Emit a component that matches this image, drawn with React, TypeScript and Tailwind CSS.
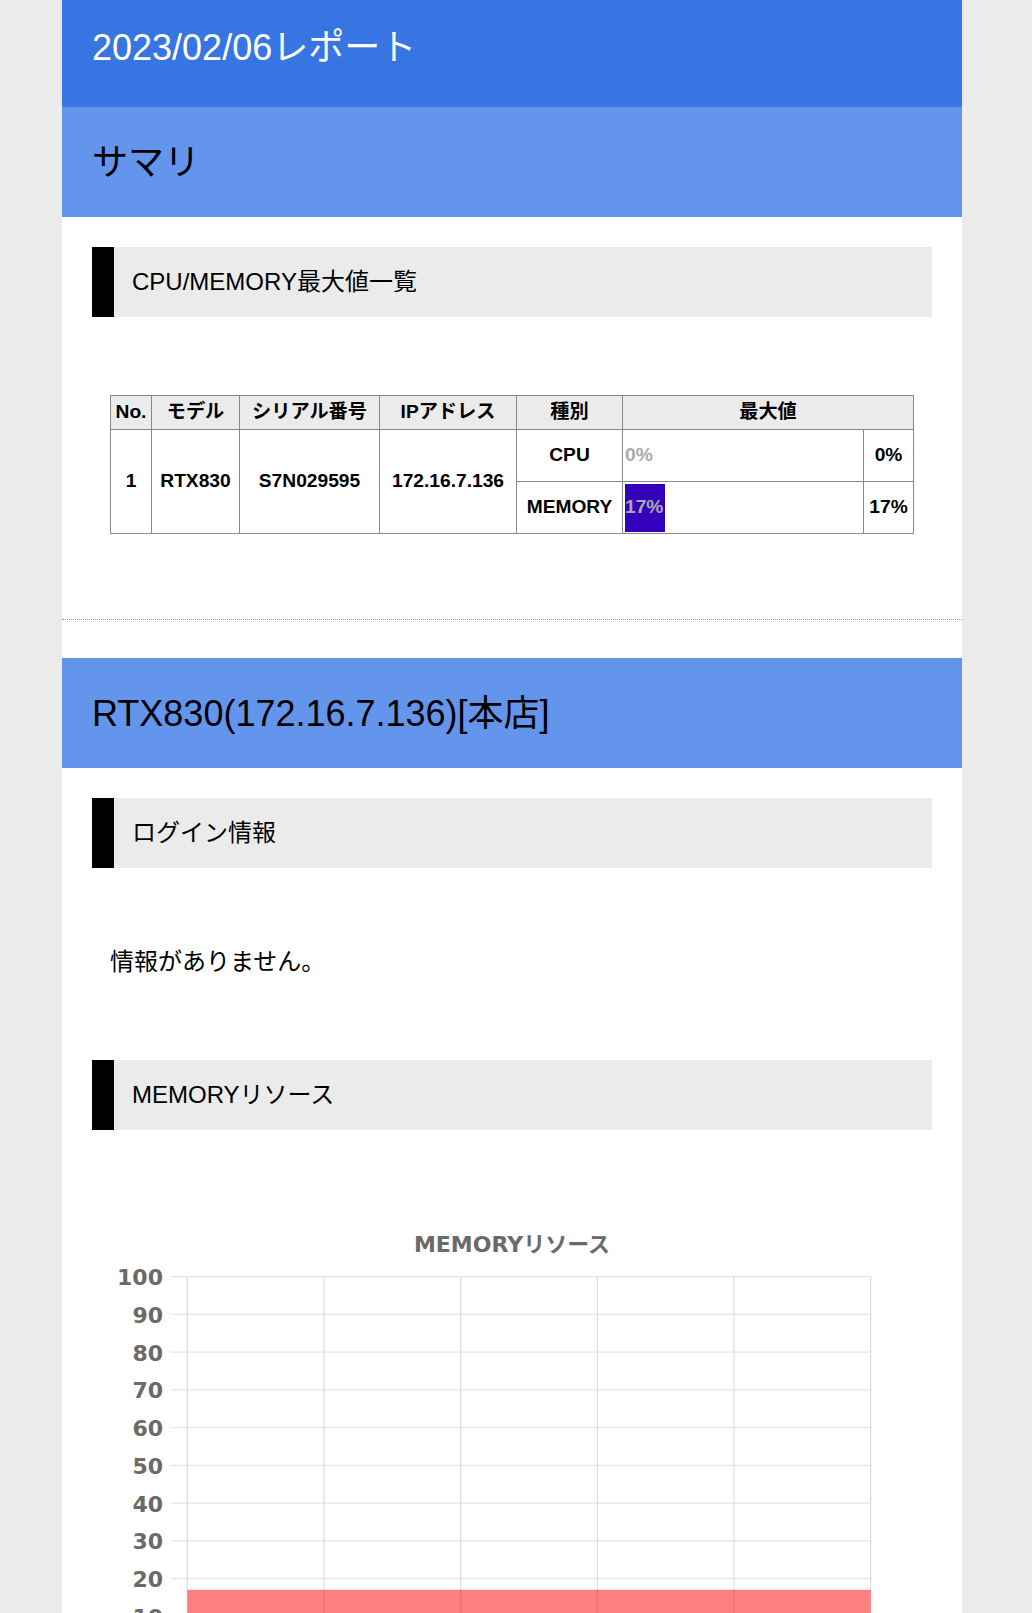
import type { ReactNode } from 'react'

const FONT = '"Liberation Sans", "Noto Sans CJK JP", sans-serif'

function SectionTitle({ children }: { children: ReactNode }) {
  return (
    <h3 className="h-[70px] flex items-center bg-[#ebebeb] border-l-[22px] border-black pl-[18px] text-[24px] leading-[36px] text-black font-normal">
      {children}
    </h3>
  )
}

function BandTitle({ children, dark }: { children: ReactNode; dark?: boolean }) {
  if (dark) {
    return (
      <h1 className="h-[107px] flex items-center pb-[13px] px-[30px] bg-[#3775e3] text-white text-[36px] leading-[47px] font-normal">
        {children}
      </h1>
    )
  }
  return (
    <h2 className="h-[110px] flex items-center px-[30px] bg-[#6495ed] text-black text-[36px] leading-[47px] font-normal">
      {children}
    </h2>
  )
}

function Bar({ value }: { value: number }) {
  return (
    <div
      className={
        'h-[48px] flex items-center whitespace-nowrap text-[#aaaaaa] ' +
        (value > 0 ? 'bg-[#3300bb]' : '')
      }
      style={{ width: `${value}%` }}
    >
      {value}%
    </div>
  )
}

const rows = [
  { kind: 'CPU', value: 0 },
  { kind: 'MEMORY', value: 17 },
]

function MaxTable() {
  const cell = 'border border-[#888888] text-center align-middle'
  return (
    <table className="table-fixed border-collapse w-[803px] text-[19.2px] font-bold text-black">
      <colgroup>
        <col className="w-[41px]" />
        <col className="w-[88px]" />
        <col className="w-[140px]" />
        <col className="w-[137px]" />
        <col className="w-[106px]" />
        <col className="w-[241px]" />
        <col className="w-[50px]" />
      </colgroup>
      <thead>
        <tr className="h-[34px] bg-[#ebebeb]">
          <th className={cell}>No.</th>
          <th className={cell}>モデル</th>
          <th className={cell}>シリアル番号</th>
          <th className={cell}>IPアドレス</th>
          <th className={cell}>種別</th>
          <th className={cell} colSpan={2}>
            最大値
          </th>
        </tr>
      </thead>
      <tbody>
        {rows.map((r, i) => (
          <tr key={r.kind} className="h-[52px]">
            {i === 0 && (
              <>
                <td className={cell} rowSpan={2}>1</td>
                <td className={cell} rowSpan={2}>RTX830</td>
                <td className={cell} rowSpan={2}>S7N029595</td>
                <td className={cell} rowSpan={2}>172.16.7.136</td>
              </>
            )}
            <td className={cell}>{r.kind}</td>
            <td className="border border-[#888888] align-middle px-[2px] py-[1px]">
              <Bar value={r.value} />
            </td>
            <td className={cell}>{r.value}%</td>
          </tr>
        ))}
      </tbody>
    </table>
  )
}

function MemoryChart() {
  const top = 76.7
  const step = 37.73
  const left = 95.3
  const right = 778.7
  const colW = (right - left) / 5
  const labels = [100, 90, 80, 70, 60, 50, 40, 30, 20, 10, 0]
  const zeroY = top + step * 10
  const barY = zeroY - 17 * (step / 10)
  const chartFont = '"DejaVu Sans", "Noto Sans CJK JP", sans-serif'

  return (
    <svg width={840} height={460} className="block">
      <text
        x={420}
        y={44}
        textAnchor="middle"
        dominantBaseline="central"
        fontFamily={chartFont}
        fontWeight="bold"
        fontSize={22}
        fill="#6a6a6a"
      >
        MEMORYリソース
      </text>
      {labels.map((v, k) => (
        <g key={v}>
          <line x1={78.7} x2={right} y1={top + k * step} y2={top + k * step} stroke="#e6e6e6" strokeWidth={1.2} />
          <text
            x={71}
            y={top + k * step + 1}
            textAnchor="end"
            dominantBaseline="central"
            fontFamily={chartFont}
            fontWeight="bold"
            fontSize={22}
            fill="#6a6a6a"
          >
            {v}
          </text>
        </g>
      ))}
      {[0, 1, 2, 3, 4, 5].map((j) => (
        <line
          key={j}
          x1={left + j * colW}
          x2={left + j * colW}
          y1={top}
          y2={zeroY + 8}
          stroke="#dddddd"
          strokeWidth={1.2}
        />
      ))}
      <rect x={left} y={barY} width={right - left} height={zeroY - barY} fill="rgba(255,0,0,0.5)" />
    </svg>
  )
}

export default function App() {
  return (
    <div className="h-[1613px] overflow-hidden bg-[#ebebeb]" style={{ fontFamily: FONT }}>
      <div className="w-[900px] ml-[62px] bg-white min-h-[1613px]">
        <BandTitle dark>2023/02/06レポート</BandTitle>
        <BandTitle>サマリ</BandTitle>

        <div className="px-[30px] pt-[30px]">
          <SectionTitle>CPU/MEMORY最大値一覧</SectionTitle>
          <div className="mt-[78px] pl-[18px]">
            <MaxTable />
          </div>
        </div>

        <div className="mt-[85px] border-t border-dotted border-[#999999]" />

        <div className="mt-[38px]">
          <BandTitle>RTX830(172.16.7.136)[本店]</BandTitle>
        </div>

        <div className="px-[30px] pt-[30px]">
          <SectionTitle>ログイン情報</SectionTitle>
          <p className="mt-[76px] pl-[18px] text-[24px] leading-[36px] text-black">情報がありません。</p>
          <div className="mt-[80px]">
            <SectionTitle>MEMORYリソース</SectionTitle>
          </div>
          <div className="mt-[70px]">
            <MemoryChart />
          </div>
        </div>
      </div>
    </div>
  )
}
